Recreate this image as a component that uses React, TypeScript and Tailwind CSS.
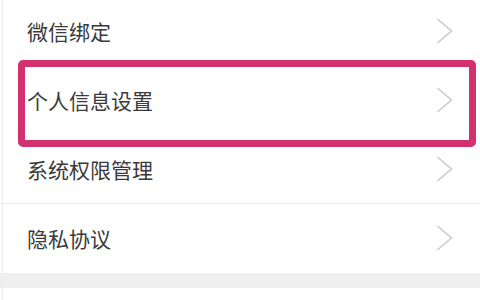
const items = ['微信绑定', '个人信息设置', '系统权限管理', '隐私协议'];

function Chevron() {
  return (
    <svg width="18" height="26" viewBox="0 0 18 26" fill="none">
      <path d="M2 1.5 L15.5 13 L2 24.5" stroke="#c9c9c9" strokeWidth="1.6" strokeLinecap="round" strokeLinejoin="round" />
    </svg>
  );
}

export default function App() {
  return (
    <div
      className="relative h-[300px] w-[480px] overflow-hidden bg-white"
      style={{ fontFamily: '"Noto Sans CJK SC", "Noto Sans", sans-serif' }}
    >
      <div className="absolute left-[2px] top-0 h-full w-px bg-[#ececec]" />

      <div className="-mt-[3px]">
        {items.map((label, i) => (
          <div
            key={label}
            className={`flex h-[69px] items-center justify-between pl-[27px] pr-[26px] ${
              i === 2 ? 'border-b border-[#ececec]' : 'border-b border-transparent'
            }`}
          >
            <span className="text-[21px] leading-none text-[#3a3a3a]">{label}</span>
            <Chevron />
          </div>
        ))}
        <div className="h-[15px] bg-[#efefef]" />
      </div>

      {/* highlight frame */}
      <div className="absolute left-[18px] top-[60px] h-[87px] w-[458px] rounded-[5px] border-[7px] border-[#d3306f]" />
    </div>
  );
}
